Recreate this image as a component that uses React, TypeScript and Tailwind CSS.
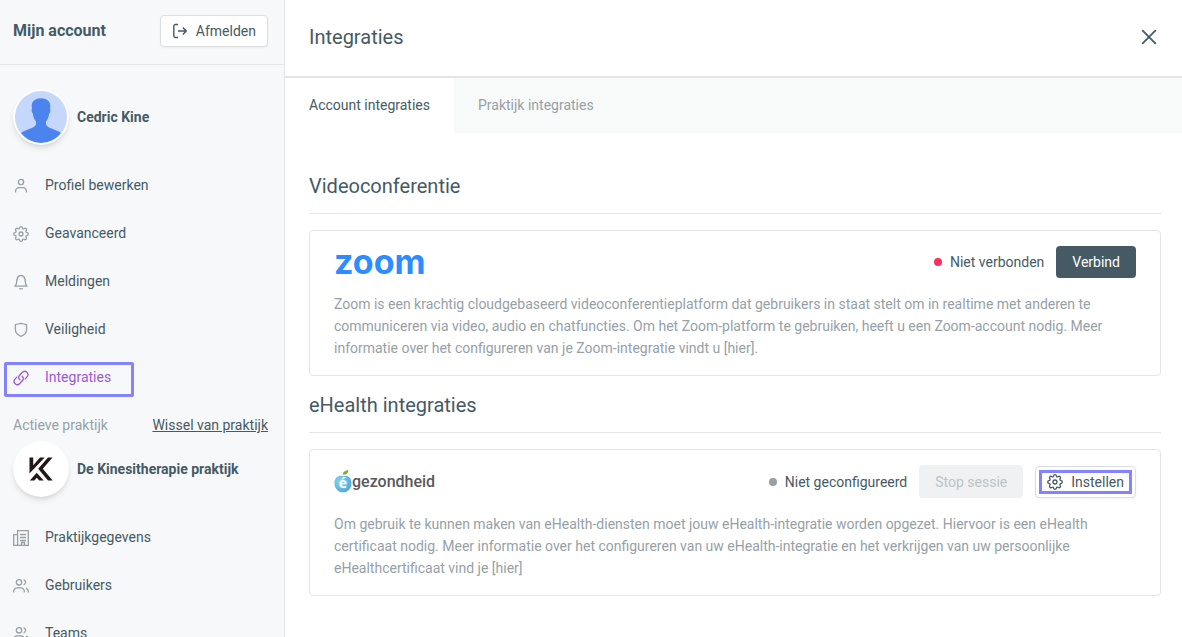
import React from 'react';

interface IconProps {
  className?: string;
}

const baseIcon = {
  width: 16,
  height: 16,
  viewBox: '0 0 16 16',
  fill: 'none',
  stroke: 'currentColor',
  strokeWidth: 1.3,
  'aria-hidden': true,
};

const UserIcon: React.FC<IconProps> = ({ className }) => (
  <svg {...baseIcon} className={className}>
    <circle cx="8" cy="4" r="2.6" />
    <path d="M2.600 14.500v-1.400A3.500 3.500 0 0 1 6.100 9.600h3.800a3.500 3.500 0 0 1 3.500 3.500v1.400" />
  </svg>
);

const GearIcon: React.FC<IconProps> = ({ className }) => (
  <svg {...baseIcon} strokeLinejoin="round" className={className}>
    <path d="M6.500 2.200C6.700 1.200 7.200.7 8 .7s1.300.5 1.500 1.500c.2.700.8.900 1.400.500.9-.6 1.600-.6 2.200 0 .6.6.6 1.300 0 2.200-.4.600-.2 1.300.6 1.500 1 .2 1.600.8 1.600 1.600s-.6 1.400-1.600 1.600c-.8.2-1 .9-.6 1.500.6.9.6 1.600 0 2.200-.6.600-1.300.6-2.200 0-.6-.4-1.200-.2-1.400.5-.2 1-.7 1.500-1.500 1.500s-1.300-.5-1.500-1.500c-.2-.7-.8-.9-1.400-.5-.9.600-1.600.6-2.200 0-.6-.6-.6-1.300 0-2.200.4-.6.2-1.300-.6-1.500C1.300 9.400.7 8.800.7 8s.6-1.400 1.600-1.600c.8-.2 1-.9.6-1.500-.6-.9-.6-1.600 0-2.200.6-.6 1.300-.6 2.200 0 .6.400 1.200.2 1.400-.5z" />
    <circle cx="8" cy="8" r="2" />
  </svg>
);

const BellIcon: React.FC<IconProps> = ({ className }) => (
  <svg {...baseIcon} strokeLinejoin="round" strokeLinecap="round" className={className}>
    <path d="M1.900 12.200c1.300-.9 1.700-2.200 1.800-4.500C3.900 4 5.100 1.500 8 1.500s4.100 2.500 4.300 6.200c.1 2.300.5 3.600 1.800 4.500z" />
    <path d="M6.800 14.600c.7.400 1.700.4 2.400 0" />
  </svg>
);

const ShieldIcon: React.FC<IconProps> = ({ className }) => (
  <svg {...baseIcon} strokeLinejoin="round" className={className}>
    <path d="M8 1.300c1.800.3 3.700.7 5.600 1.400v5.100c0 3.300-2.500 5.300-5.600 6.500-3.100-1.200-5.600-3.200-5.600-6.500V2.700C4.300 2 6.200 1.600 8 1.300z" />
  </svg>
);

const LinkIcon: React.FC<IconProps> = ({ className }) => (
  <svg {...baseIcon} strokeLinecap="round" className={className}>
    <path d="M6.900 9.700a3.100 3.100 0 0 1-.6-4l2.900-3.200a3.250 3.250 0 0 1 4.800 4.400l-1.800 2" />
    <path d="M9.100 6.300a3.100 3.100 0 0 1 .6 4l-2.900 3.200A3.250 3.250 0 0 1 2 9.100l1.800-2" />
  </svg>
);

const BuildingIcon: React.FC<IconProps> = ({ className }) => (
  <svg {...baseIcon} className={className}>
    <path d="M4.600 15.300V.7h10.700v14.600H.7V4.700h3.900" />
    <path d="M7 4.500h6M7 7.500h6M7 10.500h6M8.500 15v-2.500h3V15" />
  </svg>
);

const UsersIcon: React.FC<IconProps> = ({ className }) => (
  <svg {...baseIcon} className={className}>
    <circle cx="6" cy="4.300" r="2.700" />
    <path d="M.7 14.500v-1.200A3.400 3.400 0 0 1 4.100 9.900h3.800a3.400 3.400 0 0 1 3.400 3.400v1.200M10.600 1.700a2.700 2.700 0 0 1 0 5.200M13 10.100a3.400 3.400 0 0 1 2.300 3.200v1.200" />
  </svg>
);

const LogoutIcon: React.FC<IconProps> = ({ className }) => (
  <svg {...baseIcon} strokeWidth={1.4} className={className}>
    <path d="M6 1.500H3.600a1.800 1.800 0 0 0-1.800 1.800v9.400a1.800 1.800 0 0 0 1.800 1.800H6M6 8h8.300M10.800 4.500 14.300 8l-3.500 3.500" />
  </svg>
);

const ProfilePicture = () => (
  <svg viewBox="0 0 52 52" className="size-full rounded-full bg-[#c5d7fa]" role="img" aria-label="Cedric Kine">
    <path
      fill="#4b84ee"
      d="M26 7.300c-5.500 0-9.600 3-9.300 8.200l.3 2.600c-.8.300-.5 3.300.8 4.400.5 3.400 1.500 6.300 3.200 8v3c-1.200 4-10.500 4.800-15 8.500A26 26 0 0 0 26 52a26 26 0 0 0 20-10c-4.500-3.700-13.800-4.500-15-8.500v-3c1.700-1.700 2.700-4.600 3.200-8 1.300-1.100 1.600-4.100.8-4.400l.3-2.600C35.600 10.300 31.500 7.300 26 7.300z"
    />
  </svg>
);

const PracticeMark = () => (
  <svg viewBox="0 0 24 24" width="24" height="24" role="img" aria-label="De Kinesitherapie praktijk">
    <g fill="#231815">
      <path d="M.5.500h3.700v7.700L11 .5h4.700L.5 16.500z" />
      <path d="M19 .5h4.500L13.800 11.800l9.900 11.700H19L9.200 11.800z" />
      <path d="m.8 23.500 6.900-7.700 7 7.700h-4.500l-2.400-2.800-2.400 2.800z" />
    </g>
  </svg>
);

const AppleMark = () => (
  <svg viewBox="0 0 18 24" width="18" height="24" aria-hidden>
    <defs>
      <radialGradient id="apple" cx="35%" cy="35%" r="70%">
        <stop offset="0" stopColor="#8fd6f2" />
        <stop offset="1" stopColor="#4aa8dc" />
      </radialGradient>
    </defs>
    <path fill="url(#apple)" d="M9 6.200c3-1.700 8.500.5 8.500 6.700 0 5.500-4 9.800-8.500 9.300C4.500 22.700.5 18.400.5 12.900.5 6.700 6 4.500 9 6.200z" />
    <path fill="#7ab51d" d="M8.800 4.700C9 1.800 11 .4 14.300 0c0 3.200-2 4.900-5.500 4.700z" />
    <text x="9" y="18" textAnchor="middle" fontSize="14" fontWeight="700" fill="#fff" fontFamily="Open Sans, sans-serif">
      é
    </text>
  </svg>
);

const accountItems = [
  { label: 'Profiel bewerken', icon: UserIcon },
  { label: 'Geavanceerd', icon: GearIcon },
  { label: 'Meldingen', icon: BellIcon },
  { label: 'Veiligheid', icon: ShieldIcon },
  { label: 'Integraties', icon: LinkIcon, active: true },
];

const practiceItems = [
  { label: 'Praktijkgegevens', icon: BuildingIcon },
  { label: 'Gebruikers', icon: UsersIcon },
  { label: 'Teams', icon: UsersIcon },
];

interface NavItemProps {
  label: string;
  icon: React.FC<IconProps>;
  active?: boolean;
}

const NavItem: React.FC<NavItemProps> = ({ label, icon: Icon, active }) => (
  <li className="relative">
    <a
      href="#"
      aria-current={active ? 'page' : undefined}
      className={`flex h-12 items-center gap-4 pl-[13px] ${active ? 'text-[#9b59d0]' : 'text-[#455a64]'}`}
    >
      <Icon className={`mt-0.5 shrink-0 ${active ? '' : 'text-[#95a1a7]'}`} />
      {label}
    </a>
    {active && (
      <span className="pointer-events-none absolute top-[9px] left-1 h-[35px] w-[130px] rounded-xs border-3 border-[#8482ff]" />
    )}
  </li>
);

interface IntegrationProps {
  title: string;
  logo: React.ReactNode;
  actions: React.ReactNode;
  status: string;
  dotClass: string;
  children: React.ReactNode;
}

const Integration: React.FC<IntegrationProps> = ({ title, logo, actions, status, dotClass, children }) => (
  <section>
    <h2 className="mb-4 border-b border-[#e3e5e6] pb-[13px] text-xl leading-7">{title}</h2>
    <div className="rounded border border-[#e3e5e6] px-6 pt-[15px] pb-4">
      <div className="flex items-center justify-between">
        {logo}
        <div className="flex items-center gap-3">
          <span className="flex items-center gap-2">
            <span className={`size-2 rounded-full ${dotClass}`} />
            {status}
          </span>
          {actions}
        </div>
      </div>
      <p className="mt-[15px] leading-[22px] text-[#95a1a7]">{children}</p>
    </div>
  </section>
);

export default function App() {
  return (
    <div className="flex h-screen overflow-hidden bg-white font-['Roboto',sans-serif] text-sm text-[#455a64]">
      <aside className="w-[285px] shrink-0 overflow-hidden border-r border-[#e3e5e6] bg-[#f7f8fa]">
        <div className="flex h-[65px] items-center justify-between border-b border-[#e3e5e6] pr-4 pb-0.5 pl-[13px]">
          <h1 className="text-base font-bold">Mijn account</h1>
          <button className="flex h-8 items-center gap-2 rounded border border-[#dcdfe1] bg-white px-[11px] shadow-xs">
            <LogoutIcon />
            Afmelden
          </button>
        </div>

        <div className="flex h-24 items-center gap-2 pt-2 pl-[13px]">
          <div className="size-14 rounded-full bg-white p-0.5 shadow-md">
            <ProfilePicture />
          </div>
          <span className="font-bold">Cedric Kine</span>
        </div>

        <ul>
          {accountItems.map((item) => (
            <NavItem key={item.label} {...item} />
          ))}
        </ul>

        <div className="mt-3 flex h-6 items-center justify-between pr-4 pl-[13px]">
          <span className="text-[#95a1a7]">Actieve praktijk</span>
          <a href="#" className="underline">Wissel van praktijk</a>
        </div>
        <div className="mt-1 mb-4 flex items-center gap-2 pl-[13px]">
          <div className="flex size-14 items-center justify-center rounded-full bg-white shadow-md">
            <PracticeMark />
          </div>
          <span className="font-bold">De Kinesitherapie praktijk</span>
        </div>

        <ul>
          {practiceItems.map((item) => (
            <NavItem key={item.label} {...item} />
          ))}
        </ul>
      </aside>

      <main className="min-w-0 flex-1">
        <header className="flex h-[78px] items-center justify-between border-b-2 border-[#e3e5e6] px-6 pb-0.5">
          <h2 className="text-xl">Integraties</h2>
          <button aria-label="Sluiten">
            <svg width="18" height="18" viewBox="0 0 18 18" fill="none" stroke="currentColor" strokeWidth="1.800">
              <path d="m2.200 2.200 13.600 13.600M15.800 2.200 2.200 15.800" />
            </svg>
          </button>
        </header>

        <div role="tablist" className="flex h-[55px] bg-[#f8faf9]">
          <button role="tab" aria-selected="true" className="bg-white px-6 pb-0.5">Account integraties</button>
          <button role="tab" aria-selected="false" className="px-6 pb-0.5 text-[#95a1a7]">Praktijk integraties</button>
        </div>

        <div className="flex flex-col gap-[15px] pt-[39px] pr-[21px] pl-6">
          <Integration
            title="Videoconferentie"
            logo={<span className="font-['Inter',sans-serif] text-[34px] leading-8 font-bold text-[#2d8cff]">zoom</span>}
            status="Niet verbonden"
            dotClass="bg-[#ff2d5f]"
            actions={<button className="h-8 rounded bg-[#455a64] px-4 text-white">Verbind</button>}
          >
            Zoom is een krachtig cloudgebaseerd videoconferentieplatform dat gebruikers in staat stelt om in realtime met
            anderen te communiceren via video, audio en chatfuncties. Om het Zoom-platform te gebruiken, heeft u een
            Zoom-account nodig. Meer informatie over het configureren van je Zoom-integratie vindt u [hier].
          </Integration>

          <Integration
            title="eHealth integraties"
            logo={
              <span className="flex items-center font-['Liberation_Sans_Narrow','Roboto',sans-serif] text-base font-medium text-[#58595b]">
                <AppleMark />
                gezondheid
              </span>
            }
            status="Niet geconfigureerd"
            dotClass="bg-[#95a1a7]"
            actions={
              <>
                <button disabled className="h-[33px] rounded bg-[#f0f1f3] px-4 text-[#bcc3c7]">Stop sessie</button>
                <button className="relative flex h-8 items-center gap-2 rounded border border-[#dcdfe1] bg-white px-[11px] shadow-xs">
                  <GearIcon />
                  Instellen
                  <span className="pointer-events-none absolute inset-[3px] border-3 border-[#8482ff]" />
                </button>
              </>
            }
          >
            Om gebruik te kunnen maken van eHealth-diensten moet jouw eHealth-integratie worden opgezet. Hiervoor is een
            eHealth certificaat nodig. Meer informatie over het configureren van uw eHealth-integratie en het verkrijgen
            van uw persoonlijke eHealthcertificaat vind je [hier]
          </Integration>
        </div>
      </main>
    </div>
  );
}
